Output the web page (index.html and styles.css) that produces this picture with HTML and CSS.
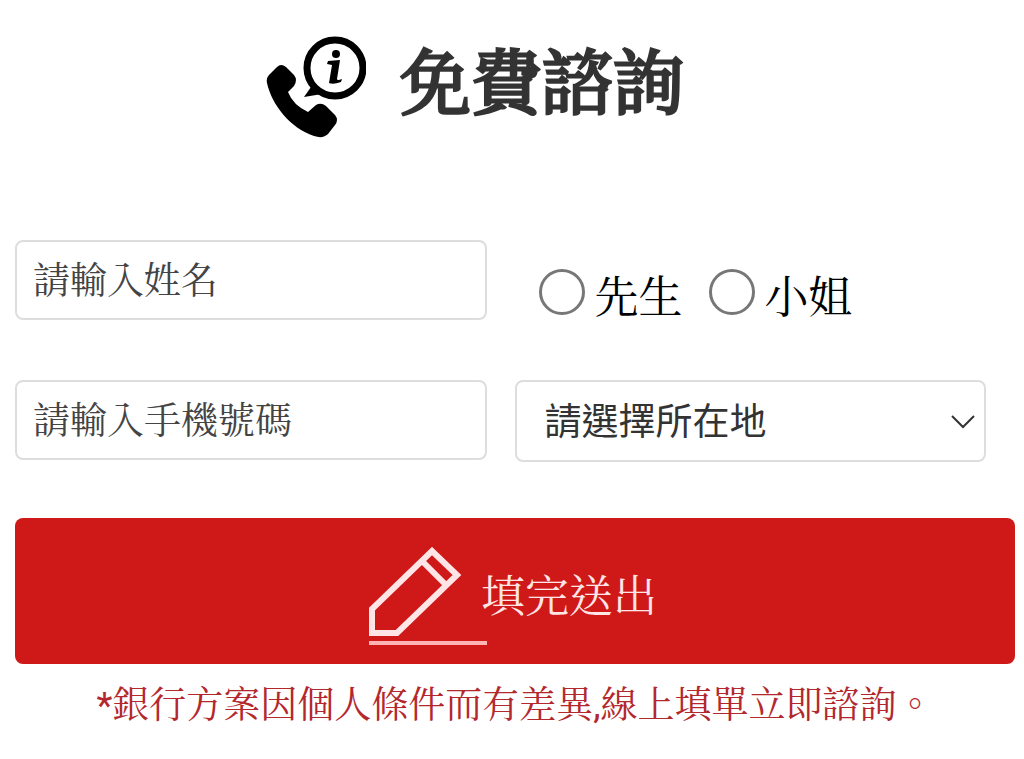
FILE: index.html
```
<!DOCTYPE html>
<html lang="zh-Hant">
<head>
<meta charset="utf-8">
<meta name="viewport" content="width=device-width, initial-scale=1">
<title>免費諮詢</title>
<link rel="stylesheet" href="styles.css">
</head>
<body>
<main class="consult">
  <header class="heading">
    <svg class="heading-icon" viewBox="0 0 100 104" aria-hidden="true">
      <path d="M3 39 L11 31 Q15 27 20 31 L28 39 Q32 44 28 50 L22 56 Q27 69 42 76 L50 69 Q55 66 60 70 L69 79 Q73 84 69 89 L62 98 Q57 103 48 100 C24 92 6 69 1 47 Q0 42 3 39Z"/>
      <path d="M45 51 L38 61 L56 58Z"/>
      <circle class="bubble" cx="69" cy="32" r="28"/>
      <path d="M97 22 h2 v20 h-2Z"/>
      <circle cx="70" cy="18" r="4"/>
      <path d="M62 25 L74 24 L71 43 Q71 45 76 43 L75 46 Q67 49 63 47 L66 29 L61 28Z"/>
    </svg>
    <h1 class="heading-title">免費諮詢</h1>
  </header>
  <form class="form">
    <div class="fields">
      <input class="field" type="text" name="name" aria-label="姓名" placeholder="請輸入姓名">
      <div class="titles" role="radiogroup" aria-label="稱謂">
        <label class="choice"><input class="radio" type="radio" name="title" value="mr"><span class="choice-text">先生</span></label>
        <label class="choice"><input class="radio" type="radio" name="title" value="ms"><span class="choice-text">小姐</span></label>
      </div>
      <input class="field" type="tel" name="phone" aria-label="手機號碼" placeholder="請輸入手機號碼">
      <div class="select-box">
        <select class="select" name="area" aria-label="所在地"><option>請選擇所在地</option></select>
        <svg class="chevron" viewBox="0 0 26 16" aria-hidden="true"><path d="M2 2 L13 13 L24 2"/></svg>
      </div>
    </div>
    <button class="submit" type="submit">
      <svg class="pencil" viewBox="0 0 118 100" aria-hidden="true">
        <path d="M3 86 V62 L63 4 L88 28 L28 86Z M53 14 L77 38"/>
        <path class="rule" d="M0 96 H118"/>
      </svg>
      <span class="submit-text">填完送出</span>
    </button>
  </form>
  <p class="note">*銀行方案因個人條件而有差異,線上填單立即諮詢。</p>
</main>
</body>
</html>
```
FILE: styles.css
```
* { box-sizing: border-box; }
body {
  margin: 0;
  background: #fff;
  color: #111;
  font-family: Roboto, "Noto Serif CJK TC", "Noto Serif CJK SC", serif;
}
.consult { padding: 36px 9px 24px 15px; }
.heading {
  display: flex;
  justify-content: center;
  align-items: center;
  gap: 34px;
  padding-right: 80px;
}
.heading-icon { width: 100px; height: 104px; }
.bubble { fill: none; stroke: #000; stroke-width: 7; }
.heading-title {
  margin: 0;
  padding-bottom: 8px;
  font-size: 71px;
  line-height: 90px;
  font-weight: 400;
  color: #333;
  -webkit-text-stroke: 3px #333;
}
.fields {
  display: grid;
  grid-template-columns: 1fr 1fr;
  align-items: start;
  gap: 60px 28px;
  padding: 100px 29px 56px 0;
}
.field, .select {
  width: 100%;
  height: 80px;
  border: 2px solid #ddd;
  border-radius: 8px;
  background: #fff;
  font-size: 37px;
  line-height: 48px;
  color: #333;
}
.field {
  padding: 0 16px 4px;
  font-family: "Noto Serif CJK TC", "Noto Serif CJK SC", serif;
}
.field::placeholder { color: #444; opacity: 1; }
.titles {
  display: flex;
  align-items: center;
  gap: 26px;
  padding: 24px 0 0 24px;
}
.choice {
  display: flex;
  align-items: center;
  gap: 10px;
  font-size: 44px;
  line-height: 56px;
  color: #000;
}
.choice-text { padding-top: 8px; margin-bottom: -4px; }
.radio {
  appearance: none;
  width: 46px;
  height: 46px;
  margin: 0;
  border: 3px solid #777;
  border-radius: 50%;
}
.radio:checked { background: #777; box-shadow: inset 0 0 0 8px #fff; }
.titles { height: 80px; }
.select-box { position: relative; }
.select {
  appearance: none;
  height: 82px;
  padding: 0 28px 4px;
  font-family: "Noto Sans CJK TC", sans-serif;
}
.chevron {
  position: absolute;
  top: 34px;
  right: 10px;
  width: 26px;
  height: 16px;
  fill: none;
  stroke: #333;
  stroke-width: 2;
  pointer-events: none;
}
.submit {
  display: flex;
  justify-content: center;
  align-items: center;
  width: 100%;
  height: 146px;
  padding: 12px 4px 0 0;
  border: 0;
  border-radius: 8px;
  background: #cf1818;
  color: #ffe5e5;
  font-family: inherit;
  font-size: 44px;
  line-height: 56px;
}
.submit-text { margin-left: -6px; }
.pencil { width: 118px; height: 100px; fill: none; stroke: #ffe5e5; stroke-width: 6; }
.pencil .rule { stroke: #ffb3b3; stroke-width: 4; }
.note {
  margin: 14px 0 0;
  font-size: 37px;
  line-height: 56px;
  color: #b3282d;
  text-align: center;
}
```
